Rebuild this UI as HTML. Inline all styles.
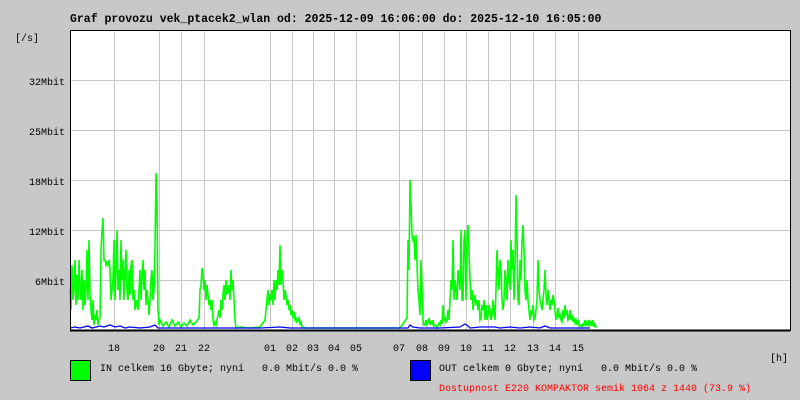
<!DOCTYPE html>
<html><head><meta charset="utf-8"><style>
html,body{margin:0;padding:0;background:#c8c8c8;}
svg{display:block;font-family:"Liberation Mono","DejaVu Sans Mono",monospace;font-size:10px;}
text{white-space:pre;}
</style></head><body>
<svg width="800" height="400" viewBox="0 0 800 400" xmlns="http://www.w3.org/2000/svg" xml:space="preserve">
<rect width="800" height="400" fill="#c8c8c8"/>
<text x="70" y="22" font-weight="bold" font-size="11.5px" fill="#000">Graf provozu vek_ptacek2_wlan od: 2025-12-09 16:06:00 do: 2025-12-10 16:05:00</text>
<rect x="70" y="30" width="720" height="300" fill="#fff"/>
<g stroke="#c8c8c8" stroke-width="1">
<path d="M70 80.5H790M70 130.5H790M70 180.5H790M70 230.5H790M70 280.5H790"/>
<path d="M114.5 30V330M159.5 30V330M181.5 30V330M204.5 30V330M270.5 30V330M292.5 30V330M313.5 30V330M334.5 30V330M356.5 30V330M399.5 30V330M422.5 30V330M444.5 30V330M466.5 30V330M488.5 30V330M510.5 30V330M533.5 30V330M555.5 30V330M578.5 30V330"/>
</g>
<polyline fill="none" stroke="#00ff00" stroke-width="1.6" points="70,290 71,310 72,265 73,300 74,290 75,260 76,305 77,275 78,300 79,260 80,285 81,300 82,270 83,310 84,280 85,305 86,290 87,250 88,300 89,240 90,295 91,310 92,320 93,300 94,325 95,315 96,320 97,310 98,325 99,320 100,318 101,250 102,230 103,218 104,260 105,260 106,265 107,262 108,265 109,260 110,270 111,300 112,290 113,280 114,240 115,300 116,270 117,230 118,290 119,270 120,300 121,240 122,280 123,260 124,300 125,270 126,250 127,290 128,300 129,270 130,295 131,265 132,260 133,300 134,290 135,310 136,300 137,305 138,310 139,290 140,270 141,300 142,275 143,260 144,290 145,270 146,305 147,290 148,300 149,315 150,300 151,280 152,270 153,300 154,290 155,250 156,173 157,200 158,310 159,325 160,320 163,326 166,322 169,327 172,320 175,326 178,322 181,327 184,323 187,326 190,320 193,325 196,322 199,318 200,290 201,285 202,268 203,275 204,290 205,280 206,300 207,285 208,295 209,305 210,300 211,310 212,300 213,320 214,325 215,322 216,325 217,320 218,315 219,310 220,318 221,300 222,310 223,295 224,285 225,300 226,280 227,295 228,290 229,285 230,300 231,270 232,290 233,280 234,300 235,320 236,328 240,327 250,328 260,327 265,320 266,310 267,300 268,290 269,305 270,295 271,300 272,290 273,305 274,280 275,300 276,280 277,290 278,270 279,285 280,245 281,285 282,270 283,280 284,300 285,290 286,295 287,305 288,300 289,310 290,305 291,315 292,310 293,318 294,312 295,320 296,318 297,322 298,320 299,318 300,325 301,322 302,326 303,328 350,328 400,328 407,318 408,240 409,270 410,180 411,205 412,235 413,240 414,238 415,260 416,235 417,265 418,290 419,300 420,315 421,260 422,290 423,320 424,325 425,325 426,320 427,325 428,322 429,318 430,325 431,322 432,324 433,320 434,326 435,325 436,326 437,328 438,325 439,323 440,325 441,320 442,324 443,305 444,320 445,318 446,322 447,320 448,310 449,320 450,300 451,280 452,290 453,240 454,300 455,280 456,290 457,300 458,270 459,280 460,290 461,230 462,300 463,300 464,240 465,230 466,300 467,240 468,225 469,250 470,280 471,300 472,290 473,310 474,300 475,295 476,305 477,300 478,310 479,300 480,320 481,318 482,305 483,310 484,300 485,320 486,305 487,320 488,315 489,305 490,310 491,320 492,315 493,300 494,310 495,320 496,290 497,250 498,270 499,290 500,260 501,270 502,300 503,310 504,300 505,270 506,280 507,300 508,260 509,280 510,290 511,240 512,270 513,250 514,300 515,270 516,195 517,240 518,300 519,305 520,260 521,280 522,240 523,225 524,250 525,290 526,300 527,280 528,300 529,310 530,320 531,310 532,315 533,305 534,320 535,318 536,310 537,300 538,260 539,290 540,300 541,305 542,310 543,300 544,290 545,270 546,295 547,305 548,290 549,300 550,310 551,300 552,305 553,295 554,300 555,310 556,320 557,315 558,308 559,318 560,315 561,320 562,322 563,310 564,318 565,305 566,315 567,310 568,320 569,318 570,310 571,320 572,315 573,322 574,318 575,323 576,320 577,325 578,320 579,325 580,326 581,325 582,327 583,324 584,325 585,320 586,325 587,322 588,326 589,320 590,325 591,322 592,326 593,320 594,327 595,324 596,328"/>
<polyline fill="none" stroke="#0000ff" stroke-width="1.3" points="70,328 75,327 80,328 88,326 92,328 100,326 104,327 110,325 115,327 120,326 125,328 130,327 140,328 150,327 155,325 158,328 165,328 180,328 200,328 230,328 260,328 280,327 290,328 300,328 400,328 408,328 410,325 413,327 420,328 440,328 460,327 465,324 468,326 470,328 480,327 495,327 500,328 510,327 520,328 530,327 540,328 545,326 550,328 560,328 590,328"/>
<path d="M70.5 30.5V330.5H790.5V30.5H70.5" fill="none" stroke="#000" stroke-width="1"/>
<path d="M70 330.5H790" stroke="#000" stroke-width="2"/>
<g fill="#000">
<text x="15" y="41">[/s]</text>
<text x="65" y="85" text-anchor="end">32Mbit</text>
<text x="65" y="135" text-anchor="end">25Mbit</text>
<text x="65" y="185" text-anchor="end">18Mbit</text>
<text x="65" y="235" text-anchor="end">12Mbit</text>
<text x="65" y="285" text-anchor="end">6Mbit</text>
<g text-anchor="middle">
<text x="114" y="351">18</text><text x="159" y="351">20</text><text x="181" y="351">21</text><text x="204" y="351">22</text>
<text x="270" y="351">01</text><text x="292" y="351">02</text><text x="313" y="351">03</text><text x="334" y="351">04</text><text x="356" y="351">05</text>
<text x="399" y="351">07</text><text x="422" y="351">08</text><text x="444" y="351">09</text><text x="466" y="351">10</text><text x="488" y="351">11</text><text x="510" y="351">12</text><text x="533" y="351">13</text><text x="555" y="351">14</text><text x="578" y="351">15</text>
</g>
<text x="770" y="361">[h]</text>
<text x="100" y="371">IN celkem 16 Gbyte; nyní   0.0 Mbit/s 0.0 %</text>
<text x="439" y="371">OUT celkem 0 Gbyte; nyní   0.0 Mbit/s 0.0 %</text>
</g>
<text x="439" y="391" fill="#ff0000">Dostupnost E220 KOMPAKTOR semik 1064 z 1440 (73.9 %)</text>
<rect x="70.5" y="360.5" width="20" height="20" fill="#00ff00" stroke="#000"/>
<rect x="410.5" y="360.5" width="20" height="20" fill="#0000ff" stroke="#000"/>
</svg>
</body></html>
